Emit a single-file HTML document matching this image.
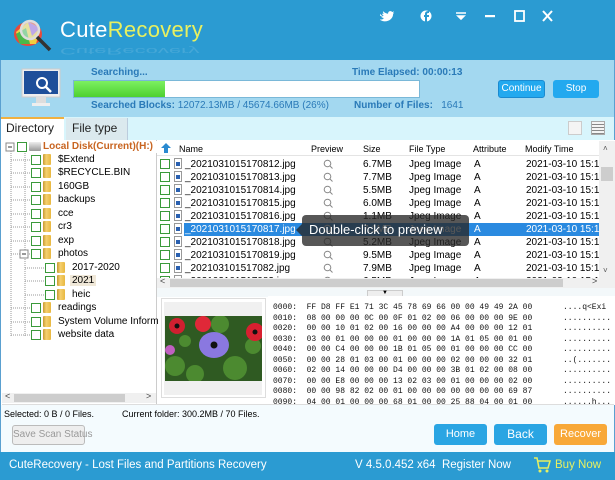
<!DOCTYPE html>
<html><head><meta charset="utf-8"><style>
*{margin:0;padding:0;box-sizing:border-box}
html,body{width:615px;height:480px;overflow:hidden}
body{font-family:"Liberation Sans",sans-serif;font-size:10px;color:#000;background:#fff;position:relative}
.a{position:absolute;white-space:nowrap}
.cb{position:absolute;width:10px;height:10px;border:1px solid #3a9a3a;background:#fff}
.fd{position:absolute;width:8px;height:11px;background:linear-gradient(90deg,#c89a30,#f5d070 40%,#e8b840);border-radius:1px}
pre.hex{position:absolute;font-family:"Liberation Mono",monospace;font-size:8px;line-height:10.5px;color:#111;margin:0}
.btn{position:absolute;border-radius:3px;color:#fff;font-size:11px;text-align:center}
</style></head><body>
<div class="a" style="left:0;top:0;width:615px;height:480px;border:1px solid #5aa0d0"></div>
<div class="a" style="left:0;top:0;width:615px;height:60px;background:#2b9bd2"></div>
<svg class="a" style="left:10px;top:14px" width="44" height="40" viewBox="0 0 44 40">
<ellipse cx="18" cy="20" rx="14" ry="12" fill="#e84a3a"/>
<path d="M6 18 L18 8 L30 14 L26 30 L10 30 Z" fill="#f0d040"/>
<path d="M6 20 L16 14 L20 30 L10 30Z" fill="#4ab84a"/>
<path d="M18 8 L30 14 L22 22Z" fill="#a060d0"/>
<circle cx="20" cy="16" r="9" fill="rgba(220,240,255,.5)" stroke="#ddd" stroke-width="2.5"/>
<line x1="27" y1="23" x2="40" y2="36" stroke="#333" stroke-width="3.5"/>
</svg>
<div class="a" style="left:60px;top:17px;font-size:22px;color:#fff;letter-spacing:0.3px">Cute<span style="color:#e8f060">Recovery</span></div>
<div class="a" style="left:60px;top:56px;font-size:22px;color:#fff;opacity:.12;transform:scaleY(-0.4);transform-origin:top">CuteRecovery</div>
<svg class="a" style="left:380px;top:10px" width="230" height="14">
<path d="M3 4c2 1 4 1 5 0-1 0-2-1-2-2 1 0 1 0 2 0-1-1-1-2-1-3 2 2 4 3 6 3 0-3 3-4 5-2 1 0 2-1 2-1 0 1-1 1-1 2 1 0 1 0 2-1-1 1-1 1-2 2 0 5-4 9-10 9-2 0-4-1-6-2 2 0 4 0 5-2-2 0-3-1-3-2 1 0 1 0 2 0-2-1-3-2-3-3z" fill="#fff" transform="translate(-3,2) scale(.85)"/>
<circle cx="46" cy="6" r="5.5" fill="#fff"/><path d="M47 12V7h2V5h-2V4c0-1 1-1 2-1V1c-3 0-4 1-4 3v1h-1v2h1v5z" fill="#2b9bd2"/>
<path d="M76 3h10M78 6l3 3 3-3z" stroke="#fff" stroke-width="1.6" fill="#fff"/>
<rect x="105" y="5" width="10" height="2.2" fill="#fff"/>
<rect x="135" y="1" width="9" height="10" fill="none" stroke="#fff" stroke-width="1.8"/>
<path d="M163 1l9 10M172 1l-9 10" stroke="#fff" stroke-width="2"/>
</svg>
<div class="a" style="left:1px;top:60px;width:613px;height:57px;background:#a3d8f0"></div>
<svg class="a" style="left:21px;top:68px" width="40" height="40" viewBox="0 0 40 40">
<rect x="1" y="1" width="38" height="28" fill="#eee" stroke="#ccc"/>
<rect x="3" y="3" width="34" height="23" fill="#1e4f9a"/>
<circle cx="21" cy="15" r="5" fill="none" stroke="#fff" stroke-width="2"/>
<line x1="24.5" y1="18.5" x2="30" y2="24" stroke="#fff" stroke-width="2.5"/>
<rect x="15" y="29" width="10" height="6" fill="#ddd"/><rect x="11" y="35" width="18" height="3" fill="#eee"/>
</svg>
<div class="a" style="left:91px;top:67px;font-weight:bold;color:#2a7ab8">Searching...</div>
<div class="a" style="left:352px;top:67px;font-weight:bold;color:#2a7ab8">Time Elapsed: 00:00:13</div>
<div class="a" style="left:73px;top:80px;width:347px;height:18px;background:#fff;border:1px solid #7ab8d8"></div>
<div class="a" style="left:74px;top:81px;width:91px;height:16px;background:linear-gradient(#7cf060,#4ed030)"></div>
<div class="a" style="left:91px;top:100px;font-weight:bold;color:#2a7ab8">Searched Blocks: <span style="font-weight:normal">12072.13MB / 45674.66MB (26%)</span></div>
<div class="a" style="left:354px;top:100px;font-weight:bold;color:#2a7ab8">Number of Files:&nbsp;&nbsp; <span style="font-weight:normal">1641</span></div>
<div class="btn" style="left:498px;top:80px;width:47px;height:18px;background:#23a9ef;border:1px solid #1a8ad0;line-height:16px;font-size:10px">Continue</div>
<div class="btn" style="left:553px;top:80px;width:46px;height:18px;background:#23a9ef;line-height:17px;font-size:10px">Stop</div>
<div class="a" style="left:1px;top:117px;width:613px;height:23px;background:#d8f5fc"></div>
<div class="a" style="left:1px;top:117px;width:63px;height:23px;background:#fff;border-top:2px solid #f0b040"></div>
<div class="a" style="left:6px;top:121px;font-size:12px;color:#222">Directory</div>
<div class="a" style="left:66px;top:118px;width:62px;height:22px;background:#dbe9ee;border-right:1px solid #bcd"></div>
<div class="a" style="left:72px;top:121px;font-size:12px;color:#222">File type</div>
<div class="a" style="left:568px;top:121px;width:14px;height:14px;border:1px solid #ccc;background:#f4f4f4"></div>
<div class="a" style="left:591px;top:121px;width:14px;height:14px;border:1px solid #aaa;background:repeating-linear-gradient(#f4f4f4 0 2px,#888 2px 3px)"></div>
<div class="a" style="left:156px;top:140px;width:1px;height:265px;background:#ccc"></div>
<svg class="a" style="left:0;top:140px" width="156" height="200">
<g stroke="#999" stroke-dasharray="1 1" fill="none">
<path d="M11 7V196"/><path d="M25 13V196"/>
<path d="M11 20h20M11 33h20M11 47h20M11 60h20M11 74h20M11 87h20M11 101h20M11 114h20M11 168h20M11 182h20M11 195h20"/>
<path d="M25 121V155M25 128h20M25 141h20M25 155h20"/>
</g>
<rect x="6" y="3" width="8" height="8" fill="#fff" stroke="#888"/><path d="M8 7h4" stroke="#333"/>
<rect x="20" y="110" width="8" height="8" fill="#fff" stroke="#888"/><path d="M22 114h4" stroke="#333"/>
</svg>
<div class="cb" style="left:17px;top:142px"></div>
<div class="a" style="left:29px;top:142px;width:12px;height:9px;background:linear-gradient(#eee,#999);border-radius:1px"></div>
<div class="a" style="left:43px;top:141px;font-weight:bold;color:#c86420">Local Disk(Current)(H:)</div>
<div class="a" style="left:154px;top:141px;width:3px;height:12px;background:#fff"></div>
<div id="tree"></div>
<div class="a" style="left:157px;top:140px;width:458px;height:16px;background:#fff;border-bottom:1px solid #e4e4e4"></div>
<svg class="a" style="left:161px;top:143px" width="10" height="10"><path d="M5 0L10 5H7V10H3V5H0Z" fill="#2a8ad0"/></svg>
<div class="a" style="left:179px;top:144px;font-size:9px">Name</div>
<div class="a" style="left:311px;top:144px;font-size:9px">Preview</div>
<div class="a" style="left:363px;top:144px;font-size:9px">Size</div>
<div class="a" style="left:409px;top:144px;font-size:9px">File Type</div>
<div class="a" style="left:473px;top:144px;font-size:9px">Attribute</div>
<div class="a" style="left:525px;top:144px;font-size:9px">Modify Time</div>
<div id="rows"></div>
<div class="a" style="left:599px;top:141px;width:16px;height:137px;background:#f0f0f0"></div>
<div class="a" style="left:601px;top:167px;width:12px;height:14px;background:#cdcdcd"></div>
<div class="a" style="left:603px;top:144px;font-size:8px;color:#555">&#x2C4;</div>
<div class="a" style="left:603px;top:266px;font-size:8px;color:#555">&#x2C5;</div>
<div class="a" style="left:157px;top:278px;width:458px;height:10px;background:#f0f0f0"></div>
<div class="a" style="left:170px;top:279px;width:393px;height:8px;background:#cdcdcd"></div>
<div class="a" style="left:160px;top:276px;font-size:9px;color:#444">&lt;</div>
<div class="a" style="left:592px;top:276px;font-size:9px;color:#444">&gt;</div>
<div class="a" style="left:157px;top:288px;width:458px;height:9px;background:#f3f8fa"></div>
<div class="a" style="left:367px;top:290px;width:36px;height:7px;background:#eee;border:1px solid #ccc;font-size:6px;text-align:center;line-height:4px">&#x25BC;</div>
<div class="a" style="left:302px;top:215px;width:167px;height:31px;background:rgba(40,40,40,.78);border-radius:4px;color:#fff;font-size:13px;padding:7px 0 0 7px">Double-click to preview</div>
<div class="a" style="left:296px;top:224px;width:0;height:0;border-top:6px solid transparent;border-bottom:6px solid transparent;border-right:6px solid rgba(40,40,40,.78)"></div>
<div class="a" style="left:161px;top:298px;width:105px;height:100px;border:1px solid #ddd;background:#fff"></div>
<div class="a" style="left:164px;top:302px;width:98px;height:93px;background:#f0f0f0"></div>
<svg class="a" style="left:165px;top:316px" width="97" height="65" viewBox="0 0 97 65">
<rect width="97" height="65" fill="#2f5a22"/>
<g fill="#4c8a30"><circle cx="10" cy="50" r="10"/><circle cx="30" cy="58" r="9"/><circle cx="70" cy="52" r="12"/><circle cx="88" cy="30" r="8"/><circle cx="55" cy="8" r="9"/><circle cx="20" cy="25" r="6"/></g>
<circle cx="12" cy="10" r="8" fill="#d02030"/><circle cx="12" cy="10" r="2.5" fill="#111"/>
<circle cx="38" cy="8" r="8" fill="#e02838"/>
<circle cx="90" cy="16" r="9" fill="#d82030"/><circle cx="90" cy="16" r="2.5" fill="#111"/>
<ellipse cx="49" cy="29" rx="15" ry="13" fill="#8a78e0"/><circle cx="49" cy="29" r="3.5" fill="#111"/>
<circle cx="5" cy="34" r="5" fill="#c060c0"/>
</svg>
<div class="a" style="left:268px;top:296px;width:347px;height:109px;background:#fff;overflow:hidden">
<pre class="hex" style="left:5px;top:7px">0000:  FF D8 FF E1 71 3C 45 78 69 66 00 00 49 49 2A 00
0010:  08 00 00 00 0C 00 0F 01 02 00 06 00 00 00 9E 00
0020:  00 00 10 01 02 00 16 00 00 00 A4 00 00 00 12 01
0030:  03 00 01 00 00 00 01 00 00 00 1A 01 05 00 01 00
0040:  00 00 C4 00 00 00 1B 01 05 00 01 00 00 00 CC 00
0050:  00 00 28 01 03 00 01 00 00 00 02 00 00 00 32 01
0060:  02 00 14 00 00 00 D4 00 00 00 3B 01 02 00 08 00
0070:  00 00 E8 00 00 00 13 02 03 00 01 00 00 00 02 00
0080:  00 00 98 82 02 00 01 00 00 00 00 00 00 00 69 87
0090:  04 00 01 00 00 00 68 01 00 00 25 88 04 00 01 00</pre>
<pre class="hex" style="left:295px;top:7px">....q&lt;Exi
..........
..........
..........
..........
..(.......
..........
..........
..........
......h...</pre>
</div>
<div class="a" style="left:2px;top:404px;width:612px;height:1px;background:#ddd"></div>
<div class="a" style="left:2px;top:393px;width:154px;height:10px;background:#f0f0f0"></div>
<div class="a" style="left:14px;top:394px;width:111px;height:8px;background:#cdcdcd"></div>
<div class="a" style="left:5px;top:391px;font-size:9px;color:#444">&lt;</div>
<div class="a" style="left:146px;top:391px;font-size:9px;color:#444">&gt;</div>
<div class="a" style="left:1px;top:405px;width:613px;height:47px;background:#f4fbfe"></div>
<div class="a" style="left:4px;top:409px;font-size:9px">Selected: 0 B / 0 Files.</div>
<div class="a" style="left:122px;top:409px;font-size:9px">Current folder: 300.2MB / 70 Files.</div>
<div class="a" style="left:12px;top:425px;width:73px;height:20px;border:1px solid #bbb;border-radius:3px;background:#eee;color:#999;font-size:10px;text-align:center;line-height:18px">Save Scan Status</div>
<div class="btn" style="left:434px;top:424px;width:53px;height:21px;background:#2aa5e3;line-height:21px">Home</div>
<div class="btn" style="left:494px;top:424px;width:53px;height:21px;background:#2aa5e3;line-height:21px;font-size:12px">Back</div>
<div class="btn" style="left:554px;top:424px;width:53px;height:21px;background:#f8a838;line-height:21px">Recover</div>
<div class="a" style="left:0;top:452px;width:615px;height:28px;background:#2b9bd2"></div>
<div class="a" style="left:9px;top:459px;font-size:11.5px;color:#fff">CuteRecovery - Lost Files and Partitions Recovery</div>
<div class="a" style="left:355px;top:459px;font-size:11.5px;color:#fff">V 4.5.0.452 x64&nbsp; Register Now</div>
<svg class="a" style="left:533px;top:456px" width="18" height="18"><path d="M1 2h3l2 10h9l2-7H5" fill="none" stroke="#e8f060" stroke-width="1.5"/><circle cx="7" cy="15" r="1.5" fill="#e8f060"/><circle cx="14" cy="15" r="1.5" fill="#e8f060"/></svg>
<div class="a" style="left:555px;top:459px;font-size:11.5px;color:#e8f060">Buy Now</div>
<script>
var t=[["$Extend",160,0],["$RECYCLE.BIN",173,0],["160GB",187,0],["backups",200,0],["cce",214,0],["cr3",227,0],["exp",241,0],["photos",254,0],["2017-2020",268,1],["2021",281,1],["heic",295,1],["readings",308,0],["System Volume Inform",322,0],["website data",335,0]];
var h="";t.forEach(function(r){var x=r[2]?45:31;h+='<div class="cb" style="left:'+x+'px;top:'+(r[1]-5)+'px"></div><div class="fd" style="left:'+(x+12)+'px;top:'+(r[1]-6)+'px"></div><div class="a" style="left:'+(x+27)+'px;top:'+(r[1]-6)+'px;'+(r[0]=="2021"?"background:#f0e8d8;padding:0 2px;margin-left:-2px":"")+'">'+r[0]+'</div>'});
document.getElementById("tree").innerHTML=h;
var n=["_202103101517081","_202103101517081","_202103101517081","_202103101517081","_202103101517081","_202103101517081","_202103101517081","_202103101517081","_20210310151708","_20210310151708"],e=["2","3","4","5","6","7","8","9","2","3"],s=["6.7MB","7.7MB","5.5MB","6.0MB","1.1MB","7.1MB","5.2MB","9.5MB","7.9MB","6.5MB"];
h="";for(var i=0;i<10;i++){var y=157+i*13;var sel=(i==5);
if(sel)h+='<div class="a" style="left:184px;top:'+(y+1)+'px;width:415px;height:13px;background:#2a8ae0"></div>';
h+='<div class="cb" style="left:160px;top:'+(y+2)+'px"></div><div class="a" style="left:174px;top:'+(y+1)+'px;width:8px;height:11px;border:1px solid #999;background:#fff"><div style="margin:3px 1px;width:4px;height:4px;background:#2a60b0"></div></div>';
var c=sel?"color:#fff;":"";
h+='<div class="a" style="left:185px;top:'+(y+2)+'px;'+c+'">'+n[i]+e[i]+'.jpg</div>';
h+='<svg class="a" style="left:323px;top:'+(y+2)+'px" width="10" height="10"><circle cx="4.5" cy="4.5" r="3.3" fill="none" stroke="'+(sel?"#fff":"#888")+'"/><path d="M7 7l2.5 2.5" stroke="'+(sel?"#fff":"#888")+'"/></svg>';
h+='<div class="a" style="left:363px;top:'+(y+2)+'px;'+c+'">'+s[i]+'</div><div class="a" style="left:409px;top:'+(y+2)+'px;'+c+'">Jpeg Image</div><div class="a" style="left:474px;top:'+(y+2)+'px;'+c+'">A</div><div class="a" style="left:526px;top:'+(y+2)+'px;'+c+'">2021-03-10 15:17</div>';}
document.getElementById("rows").innerHTML=h;
</script>
</body></html>
